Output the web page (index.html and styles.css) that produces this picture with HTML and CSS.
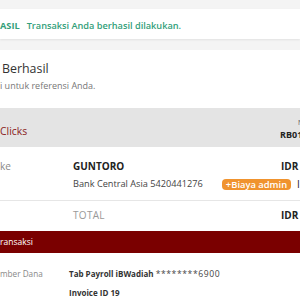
FILE: index.html
```html
<!DOCTYPE html>
<html lang="id">
<head>
  <meta charset="UTF-8">
  <meta name="viewport" content="width=device-width, initial-scale=1.0">
  <title>Transaksi Berhasil</title>
  <link rel="stylesheet" href="styles.css">
</head>
<body>
  <div class="page">
    <div class="top">
      <div class="banner">
        <b>ASIL</b>
        <span>Transaksi Anda berhasil dilakukan.</span>
      </div>
    </div>

    <div class="head">
      <h1>Berhasil</h1>
      <p>i untuk referensi Anda.</p>
    </div>

    <div class="merchant">
      <div class="m-name">Clicks</div>
      <div class="ref">
        <small>No. Ref</small>
        <b>RB01</b>
      </div>
    </div>

    <div class="transfer">
      <div class="line">
        <div class="label">ke</div>
        <b class="value">GUNTORO</b>
        <b class="amount">IDR</b>
      </div>
      <div class="line bank">
        <div class="label"></div>
        <span class="bank-name">Bank Central Asia 5420441276</span>
        <span class="badge">+Biaya admin</span>
        <span class="fee">I</span>
      </div>
    </div>

    <div class="line total">
      <div class="label"></div>
      <div class="value">TOTAL</div>
      <b class="amount">IDR</b>
    </div>

    <div class="bar">ransaksi</div>

    <div class="detail">
      <div class="d-row">
        <div class="d-label">mber Dana</div>
        <div class="d-value"><b>Tab Payroll iBWadiah</b> <span class="mask">********6900</span></div>
      </div>
      <div class="d-row">
        <div class="d-label"></div>
        <div class="d-value"><b>Invoice ID 19</b></div>
      </div>
    </div>
  </div>
</body>
</html>
```

FILE: styles.css
```css
* {
  margin: 0;
  padding: 0;
  box-sizing: border-box;
}

html, body {
  width: 300px;
  height: 300px;
  overflow: hidden;
}

body {
  font-family: "Open Sans", Arial, sans-serif;
  background-color: #fff;
  color: #333;
}

.page {
  width: 300px;
}

.top {
  background-color: #f4f4f4;
  padding: 9px 0 11px;
}

.banner {
  background-color: #fff;
  height: 30px;
  display: flex;
  align-items: center;
  gap: 7px;
  font-size: 9.2px;
  color: #33a07a;
  padding-top: 2px;
  box-shadow: 0 1px 2px rgba(0, 0, 0, 0.08);
}

.banner b {
  font-weight: 700;
}

.banner span {
  font-weight: 600;
}

.head {
  padding: 10px 0 0 2px;
  height: 58px;
}

.head h1 {
  font-size: 12.4px;
  font-weight: 400;
  line-height: 18px;
  color: #333;
}

.head p {
  font-size: 9px;
  color: #777;
  margin-left: -2px;
  line-height: 15px;
}

.merchant {
  background-color: #e4e4e4;
  height: 39px;
  display: flex;
  align-items: center;
  justify-content: space-between;
}

.m-name {
  font-size: 10.4px;
  color: #8a1a1a;
  padding-top: 7px;
}

.ref {
  width: 20px;
  display: flex;
  flex-direction: column;
  padding-top: 4px;
}

.ref small {
  font-size: 7px;
  color: #555;
  padding-left: 18px;
  line-height: 10px;
  white-space: nowrap;
}

.ref b {
  font-size: 9px;
  color: #222;
  line-height: 13px;
}

.transfer {
  border-bottom: 1px solid #e6e6e6;
  padding: 12px 0 9px;
}

.line {
  display: flex;
  align-items: center;
  font-size: 10px;
  line-height: 14px;
  white-space: nowrap;
}

.label {
  width: 73px;
  color: #888;
  flex-shrink: 0;
}

.value {
  width: 208px;
  color: #222;
}

.amount {
  color: #222;
}

.bank {
  margin-top: 4px;
}

.bank-name {
  width: 149px;
  font-size: 9.2px;
  color: #444;
}

.badge {
  width: 69px;
  background-color: #f0932e;
  color: #fff;
  border-radius: 4px;
  line-height: 11px;
  font-size: 9.4px;
  font-weight: 600;
  text-align: center;
}

.fee {
  margin-left: 6px;
  color: #222;
}

.total {
  padding-top: 7px;
  height: 30px;
  align-items: flex-start;
}

.total .value {
  color: #999;
  letter-spacing: 0.3px;
}

.bar {
  background-color: #7a0000;
  color: #fff;
  font-size: 8.5px;
  height: 22px;
  line-height: 22px;
}

.detail {
  padding-top: 11px;
}

.d-row {
  display: flex;
  height: 19px;
  align-items: center;
}

.d-label {
  width: 69px;
  font-size: 8.2px;
  color: #888;
}

.d-value {
  font-size: 8px;
  color: #333;
  white-space: nowrap;
}

.d-value b {
  font-weight: 700;
}

.mask {
  font-size: 8.6px;
  letter-spacing: 0.6px;
  color: #444;
}
```
